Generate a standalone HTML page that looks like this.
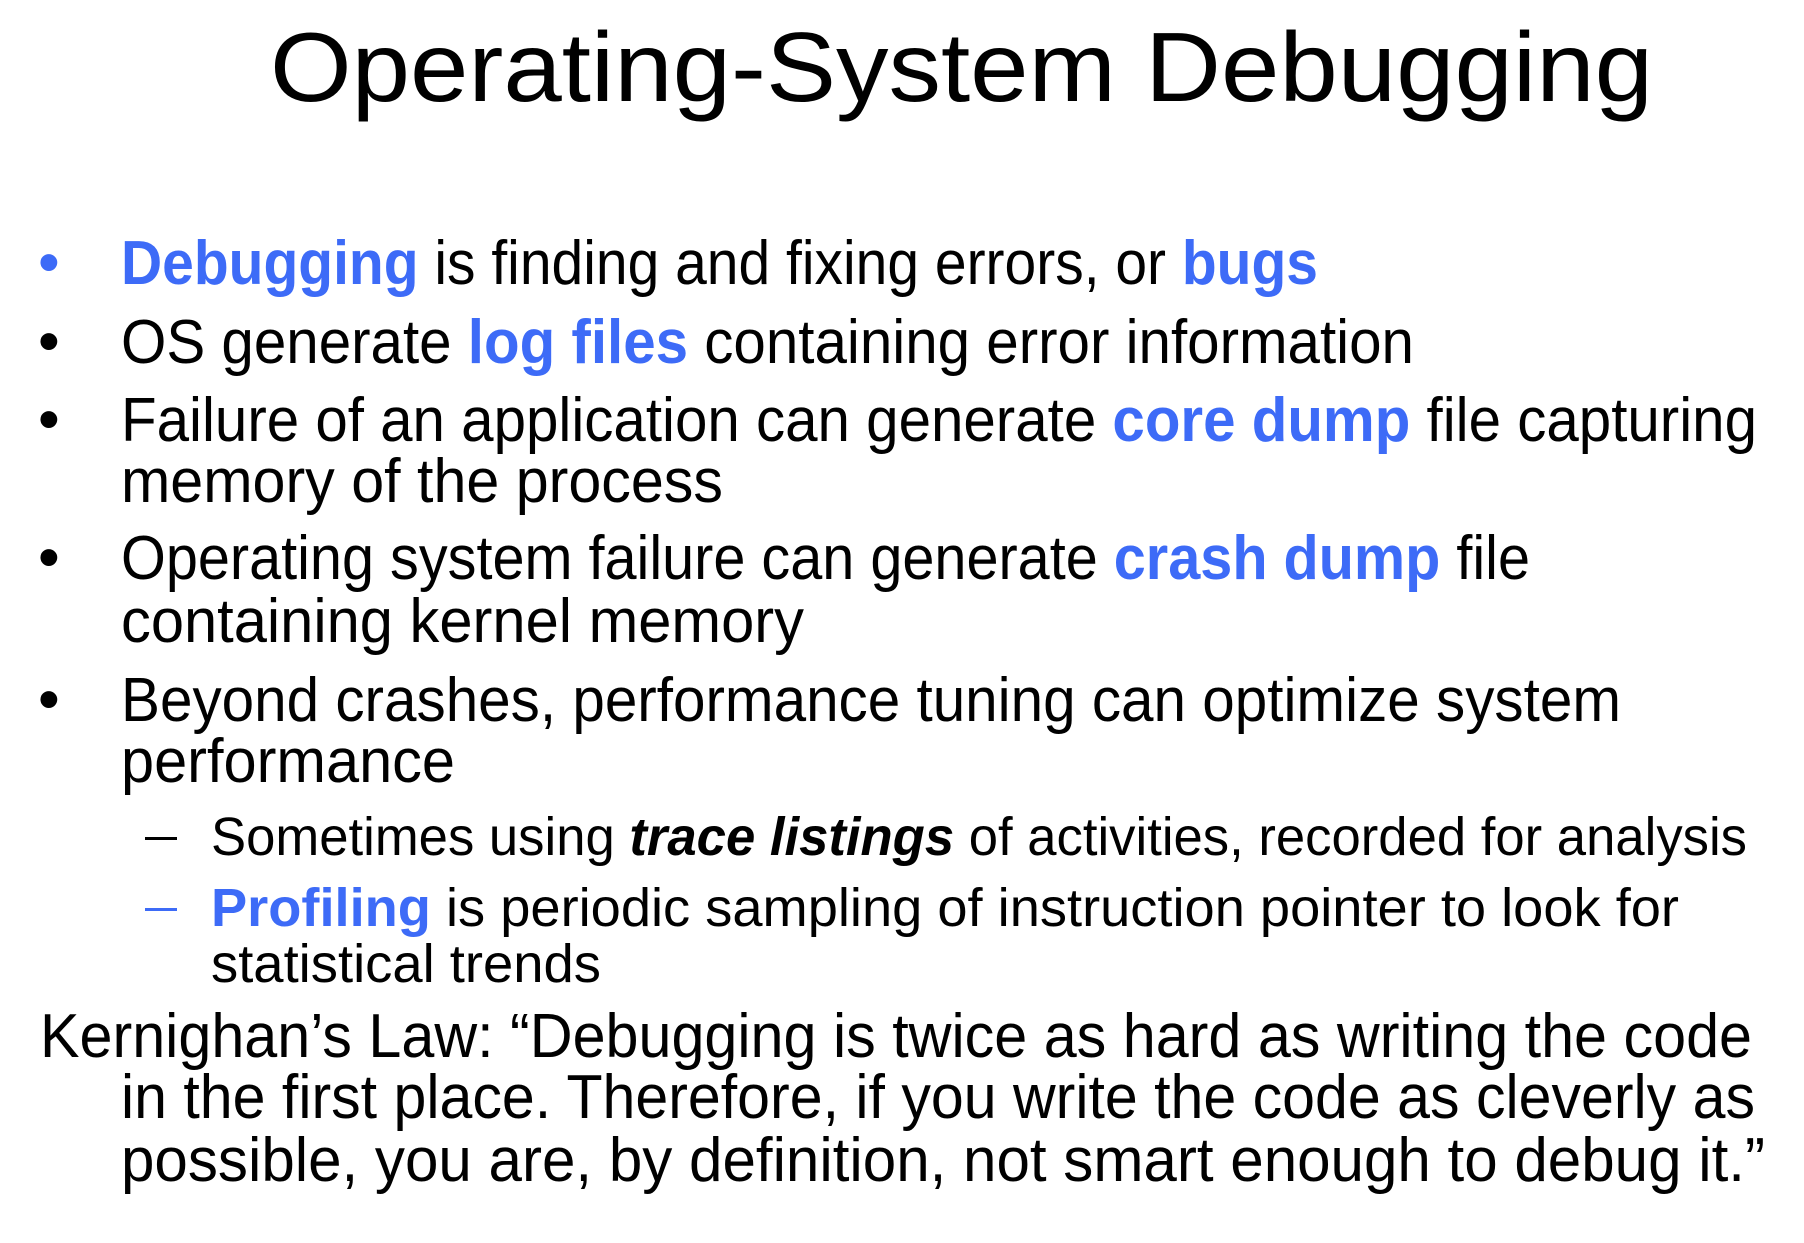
<!DOCTYPE html>
<html><head><meta charset="utf-8"><style>
html,body{margin:0;padding:0;background:#fff;width:1804px;height:1243px;overflow:hidden}
svg{display:block}
text{font-family:"Liberation Sans",sans-serif;fill:#000}
.b{fill:#3d6bf7;font-weight:bold}
.t{font-size:62px}
.s{font-size:54px}
</style></head><body>
<svg width="1804" height="1243" viewBox="0 0 1804 1243">
<text x="270" y="101" font-size="98" textLength="1383" lengthAdjust="spacingAndGlyphs">Operating-System Debugging</text>

<text x="38" y="283" class="t" style="fill:#3d6bf7">•</text>
<text x="121" y="284" class="t" textLength="1197" lengthAdjust="spacingAndGlyphs"><tspan class="b">Debugging</tspan> is finding and fixing errors, or <tspan class="b">bugs</tspan></text>

<text x="38" y="362" class="t">•</text>
<text x="121" y="363" class="t" textLength="1293" lengthAdjust="spacingAndGlyphs">OS generate <tspan class="b">log files</tspan> containing error information</text>

<text x="38" y="440" class="t">•</text>
<text x="121" y="441" class="t" textLength="1636" lengthAdjust="spacingAndGlyphs">Failure of an application can generate <tspan class="b">core dump</tspan> file capturing</text>
<text x="121" y="502" class="t" textLength="602" lengthAdjust="spacingAndGlyphs">memory of the process</text>

<text x="38" y="578" class="t">•</text>
<text x="121" y="579" class="t" textLength="1409" lengthAdjust="spacingAndGlyphs">Operating system failure can generate <tspan class="b">crash dump</tspan> file</text>
<text x="121" y="642" class="t" textLength="683" lengthAdjust="spacingAndGlyphs">containing kernel memory</text>

<text x="38" y="720" class="t">•</text>
<text x="121" y="721" class="t" textLength="1500" lengthAdjust="spacingAndGlyphs">Beyond crashes, performance tuning can optimize system</text>
<text x="121" y="782" class="t" textLength="334" lengthAdjust="spacingAndGlyphs">performance</text>

<rect x="145" y="837" width="32" height="3" fill="#000"/>
<text x="211" y="855" class="s" textLength="1536" lengthAdjust="spacingAndGlyphs">Sometimes using <tspan font-weight="bold" font-style="italic">trace listings</tspan> of activities, recorded for analysis</text>

<rect x="145" y="908" width="32" height="3" fill="#3d6bf7"/>
<text x="211" y="926" class="s" textLength="1468" lengthAdjust="spacingAndGlyphs"><tspan class="b">Profiling</tspan> is periodic sampling of instruction pointer to look for</text>
<text x="211" y="982" class="s" textLength="390" lengthAdjust="spacingAndGlyphs">statistical trends</text>

<text x="40" y="1057" class="t" textLength="1712" lengthAdjust="spacingAndGlyphs">Kernighan’s Law: “Debugging is twice as hard as writing the code</text>
<text x="121" y="1118" class="t" textLength="1634" lengthAdjust="spacingAndGlyphs">in the first place. Therefore, if you write the code as cleverly as</text>
<text x="121" y="1181" class="t" textLength="1644" lengthAdjust="spacingAndGlyphs">possible, you are, by definition, not smart enough to debug it.”</text>
</svg>
</body></html>
